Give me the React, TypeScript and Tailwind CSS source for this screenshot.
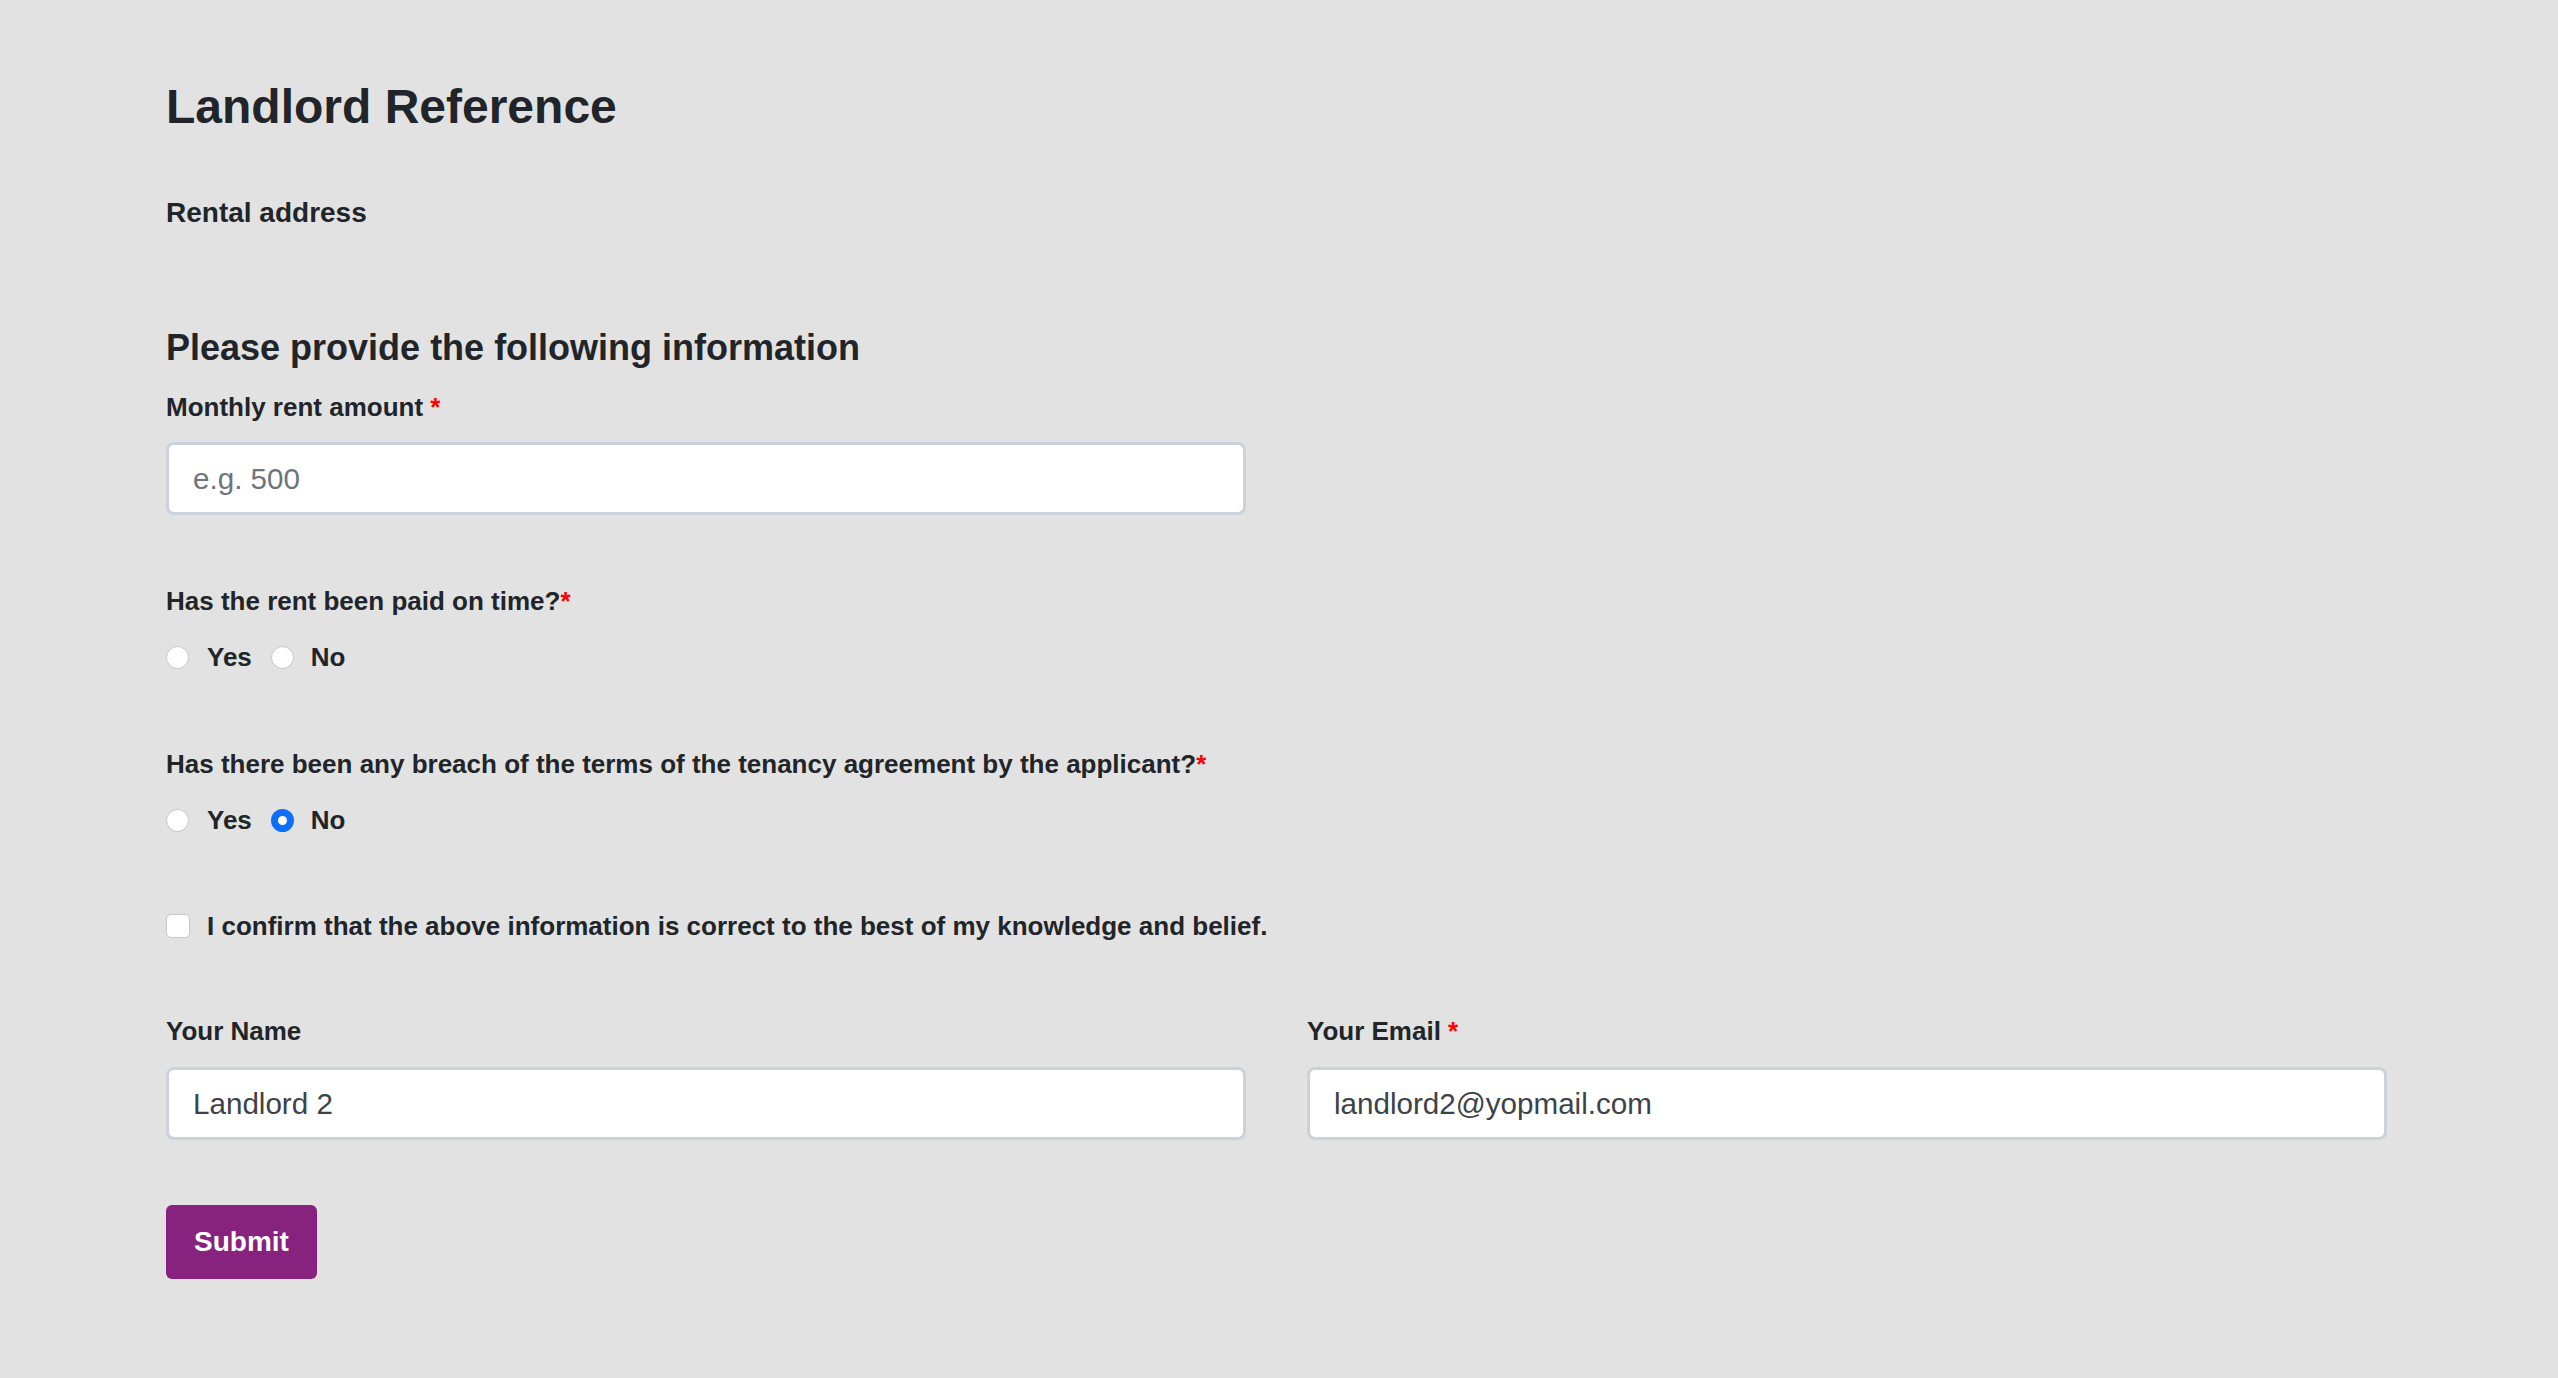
import { useState } from 'react';

function Radio({ checked }: { checked?: boolean }) {
  return checked ? (
    <span className="flex items-center justify-center w-[23px] h-[23px] rounded-full bg-[#0d6efd] shrink-0">
      <span className="w-[9px] h-[9px] rounded-full bg-white" />
    </span>
  ) : (
    <span className="w-[23px] h-[23px] rounded-full bg-white border border-[#c4c7cb] shrink-0" />
  );
}

function Required() {
  return <span className="text-[#ff0000]">*</span>;
}

function YesNo({ value }: { value: 'yes' | 'no' | null }) {
  return (
    <div className="flex items-center h-[38px]">
      <Radio checked={value === 'yes'} />
      <span className="ml-[18px] mr-[19px]">Yes</span>
      <Radio checked={value === 'no'} />
      <span className="ml-[17px]">No</span>
    </div>
  );
}

const inputClass =
  'block w-full h-[73px] px-[24px] bg-white border-[3px] border-[#cbd2da] rounded-[8px] text-[29.6px] font-normal text-[#3d4248] placeholder:text-[#6c757d] outline-none';

export default function App() {
  const [name, setName] = useState('Landlord 2');
  const [email, setEmail] = useState('landlord2@yopmail.com');
  const [rent, setRent] = useState('');

  return (
    <div
      className="min-h-[1378px] bg-[#e2e2e2] text-[#212529] pl-[166px] pr-[171px] pt-[78px]"
      style={{ fontFamily: '"Liberation Sans", Arial, sans-serif' }}
    >
      <h1 className="text-[48px] leading-[58px] font-bold">Landlord Reference</h1>

      <div className="mt-[58px] text-[28px] leading-[38px] font-bold">Rental address</div>

      <h3 className="mt-[94px] text-[36px] leading-[43px] font-bold">Please provide the following information</h3>

      <form className="text-[26px] leading-[38px] font-bold" onSubmit={(e) => e.preventDefault()}>
        <div className="w-[1080px]">
          <label className="block mt-[19px]">
            Monthly rent amount <Required />
          </label>
          <input
            className={`${inputClass} mt-[16px]`}
            placeholder="e.g. 500"
            value={rent}
            onChange={(e) => setRent(e.target.value)}
          />
        </div>

        <div className="mt-[67px]">
          Has the rent been paid on time?<Required />
        </div>
        <div className="mt-[18px]">
          <YesNo value={null} />
        </div>

        <div className="mt-[69px]">
          Has there been any breach of the terms of the tenancy agreement by the applicant?<Required />
        </div>
        <div className="mt-[18px]">
          <YesNo value="no" />
        </div>

        <div className="mt-[68px] flex items-center h-[38px]">
          <span className="w-[24px] h-[24px] rounded-[5px] bg-white border border-[#c4c7cb] shrink-0" />
          <span className="ml-[17px]">I confirm that the above information is correct to the best of my knowledge and belief.</span>
        </div>

        <div className="mt-[67px] grid grid-cols-2 gap-x-[61px]">
          <div>
            <label className="block">Your Name</label>
            <input
              className={`${inputClass} mt-[17px]`}
              value={name}
              onChange={(e) => setName(e.target.value)}
            />
          </div>
          <div>
            <label className="block">
              Your Email <Required />
            </label>
            <input
              className={`${inputClass} mt-[17px]`}
              value={email}
              onChange={(e) => setEmail(e.target.value)}
            />
          </div>
        </div>

        <button
          type="submit"
          className="mt-[65px] h-[74px] w-[151px] rounded-[6px] bg-[#87227f] text-white text-[28px] font-bold"
        >
          Submit
        </button>
      </form>
    </div>
  );
}
